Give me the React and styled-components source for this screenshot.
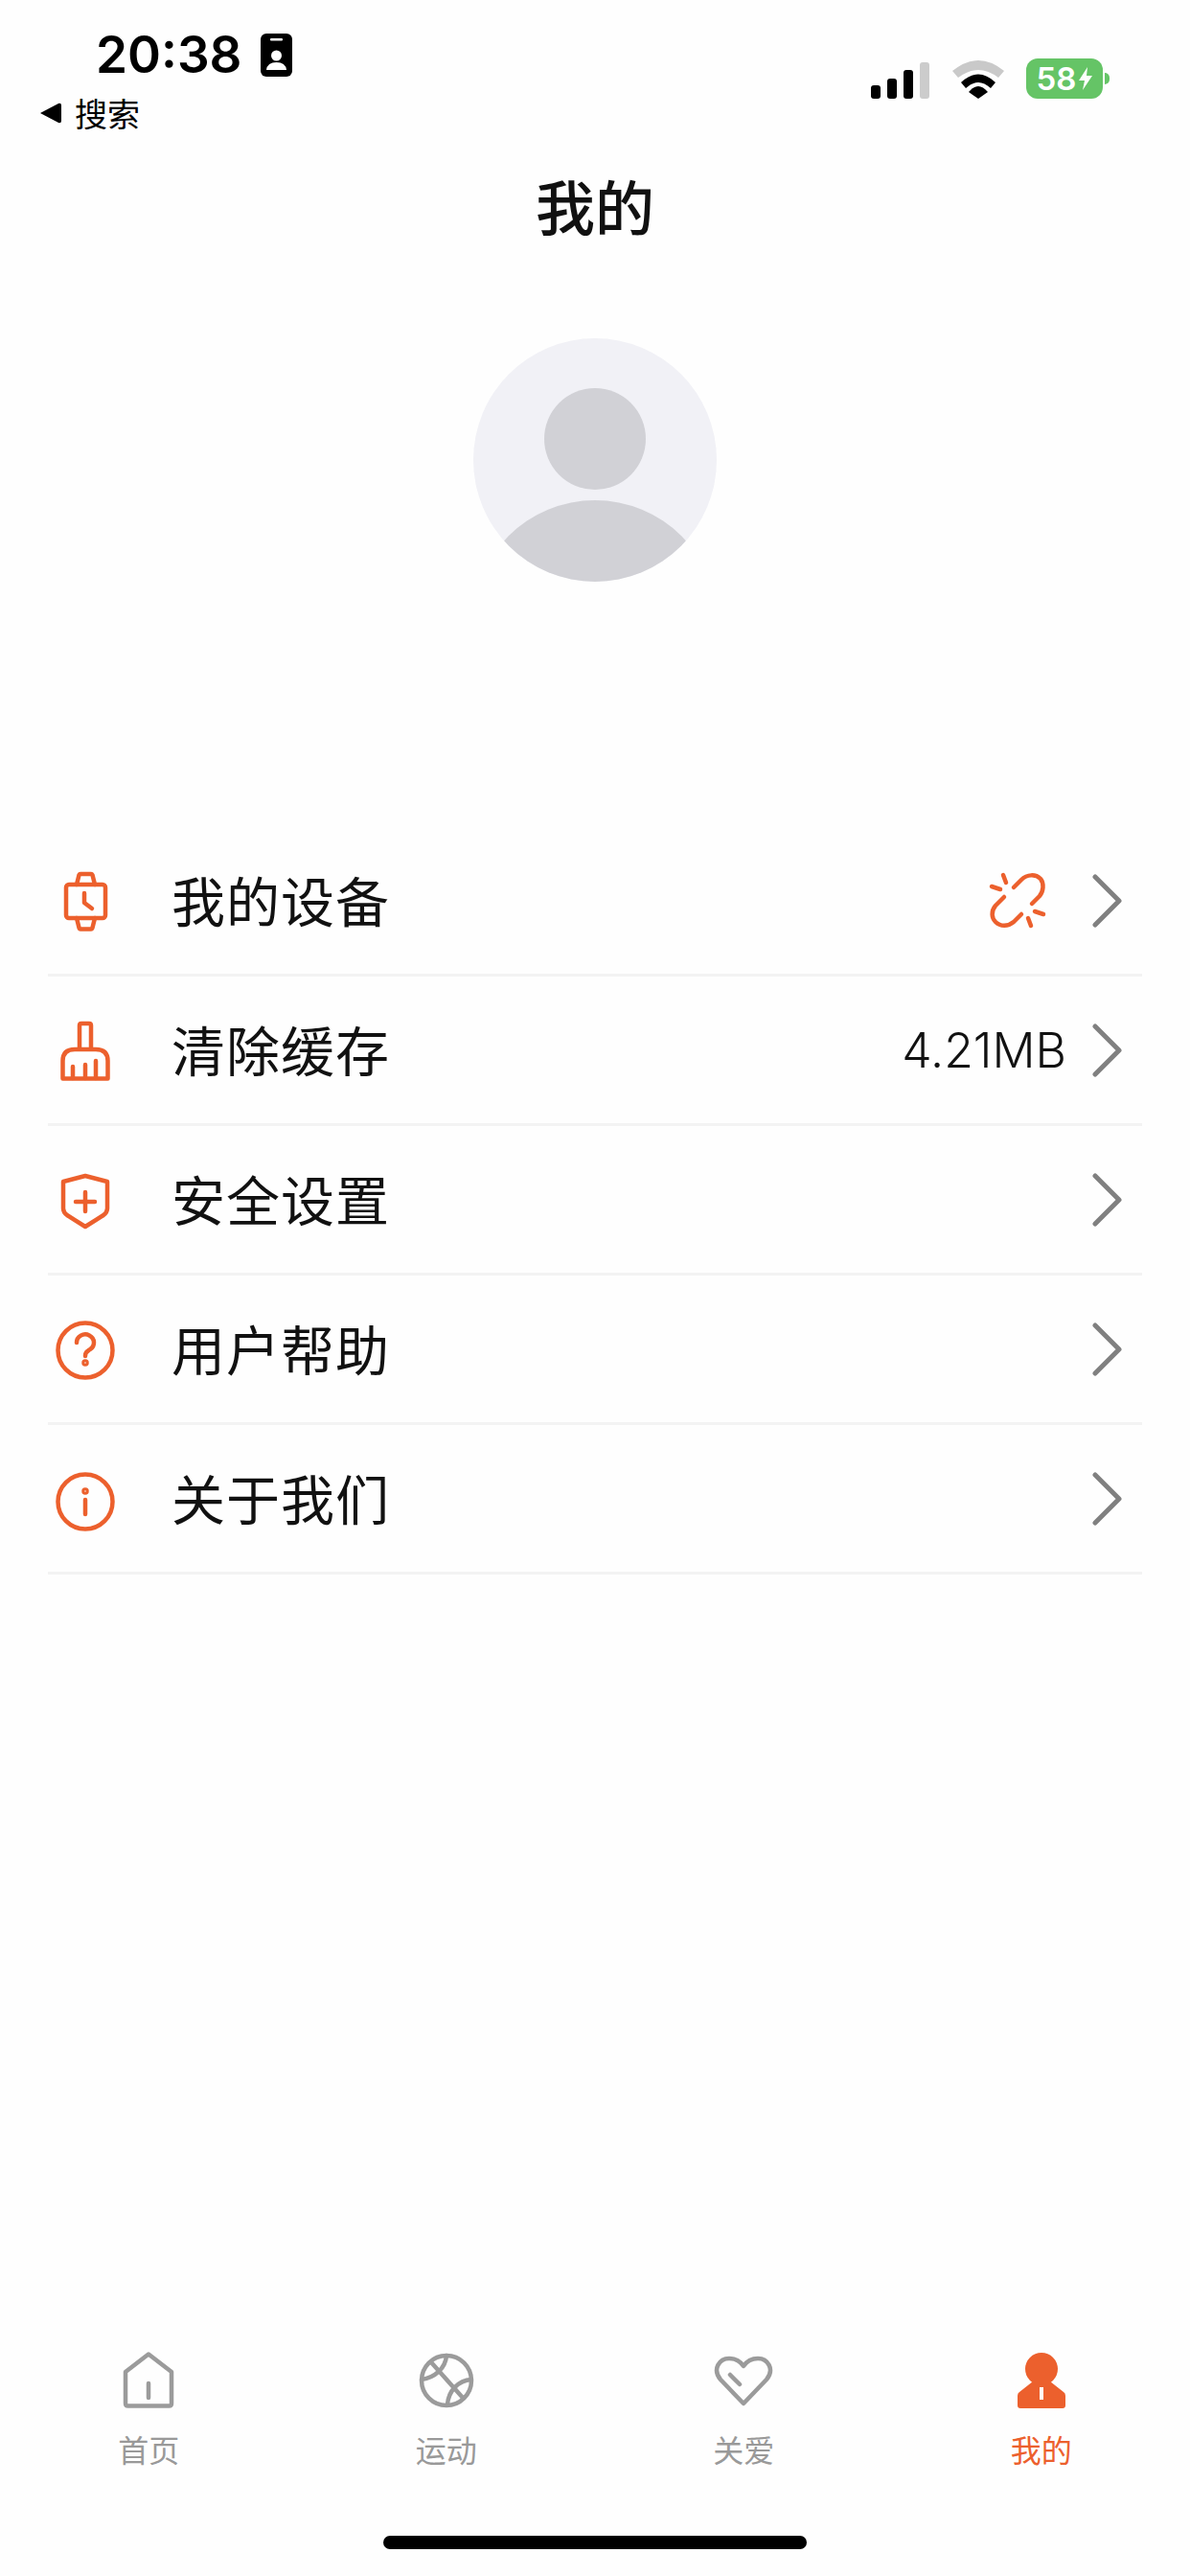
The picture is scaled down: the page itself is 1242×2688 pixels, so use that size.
import React from "react";
import styled, { createGlobalStyle } from "styled-components";

const ORANGE = "#ec602d";
const GRAY = "#9b9b9b";
const CJK = `"Noto Sans CJK SC", "Liberation Sans", sans-serif`;

const GlobalStyle = createGlobalStyle`
  html, body {
    margin: 0;
    padding: 0;
    background: #fefefe;
  }
`;

// 메뉴 아이콘
const WatchIcon = () => (
  <MenuSvg viewBox="0 0 72 72">
    <rect x="16" y="19" width="41" height="35" rx="3" />
    <path d="M27 19 L29.5 9 Q30 8 31 8 H42 Q43 8 43.5 9 L46 19" />
    <path d="M27 54 L29.5 64 Q30 65.500 31 65.500 H42 Q43 65.500 43.500 64 L46 54" />
    <path d="M35 28 V38 L43 44" />
  </MenuSvg>
);

const BroomIcon = () => (
  <MenuSvg viewBox="0 0 72 72">
    <path d="M30 34 V10 Q30 8 32 8 H40 Q42 8 42 10 V34" />
    <path d="M12.500 65.500 V47 Q12.500 35 25 35 H47 Q59.500 35 59.500 47 V65.500 Z" />
    <path d="M23 65 V53 M36 65 V51 M47 65 V47" />
  </MenuSvg>
);

const ShieldIcon = () => (
  <MenuSvg viewBox="0 0 72 72">
    <path d="M36 11 L59 17 V45 Q59 49 55 52 L36 64 L17 52 Q13 49 13 45 V17 Z" />
    <path d="M26 38 H46 M36 28 V48" />
  </MenuSvg>
);

const HelpIcon = () => (
  <MenuSvg viewBox="0 0 72 72">
    <circle cx="36" cy="37" r="28.500" />
    <path d="M27 29 a9 8.500 0 1 1 14 7 c-3 2 -5 3 -5 7" />
    <circle cx="36" cy="50" r="1.500" />
  </MenuSvg>
);

const InfoIcon = () => (
  <MenuSvg viewBox="0 0 72 72">
    <circle cx="36" cy="39" r="28.500" />
    <circle cx="36" cy="28" r="1.500" />
    <path d="M36 37 V52" />
  </MenuSvg>
);

const BrokenLink = () => (
  <LinkSvg viewBox="0 0 60 60">
    <path d="M26 16 L34 8 C40 2 49 2 54 7 C58 12 57 20 53 25 L45 33" />
    <path d="M16 26 L7 35 C2 41 3 48 7 52 C12 57 20 57 26 52 L34 44" />
    <path d="M15 3 L18 11 M3 15 L12 18 M48 41 L57 44 M41 48 L44 56" />
  </LinkSvg>
);

const Chevron = () => (
  <ChevronSvg viewBox="0 0 32 56">
    <path d="M3 3 L28 28 L3 53" />
  </ChevronSvg>
);

// 탭 아이콘
const HomeIcon = () => (
  <TabSvg viewBox="0 0 72 64" $color={GRAY}>
    <path d="M36 4.500 L60 23 V56 Q60 58.500 57.500 58.500 H14.500 Q12 58.500 12 56 V23 Z" />
    <path d="M36 35 V50" />
  </TabSvg>
);

const BallIcon = () => (
  <TabSvg viewBox="0 0 72 64" $color={GRAY}>
    <circle cx="36" cy="32" r="26" />
    <path d="M20 13 L53 50" />
    <path d="M36 6 C35 19 24 29 10 31" />
    <path d="M62 31 C48 32 38 43 37 57" />
  </TabSvg>
);

const HeartIcon = () => (
  <TabSvg viewBox="0 0 72 64" $color={GRAY}>
    <path d="M36 56 L12 31 C3 20 11 9 21 9 C27 9 32 11 36 17 C40 11 45 9 51 9 C61 9 69 20 60 31 Z" />
    <path d="M22 26 L32 36" />
  </TabSvg>
);

const PersonIcon = () => (
  <TabSvg viewBox="0 0 72 64" $color={ORANGE} $filled>
    <circle cx="36" cy="20" r="17" />
    <path d="M11 48 Q11 45 13 44 L27 33 H45 L59 44 Q61 45 61 48 V58 Q61 61 58 61 H14 Q11 61 11 58 Z" />
    <rect x="34" y="39" width="4" height="13" fill="#fefefe" stroke="none" />
  </TabSvg>
);

const Avatar = () => (
  <AvatarSvg viewBox="0 0 254 254">
    <defs>
      <clipPath id="avatarClip">
        <circle cx="127" cy="127" r="127" />
      </clipPath>
    </defs>
    <circle cx="127" cy="127" r="127" fill="#f1f1f6" />
    <circle cx="127" cy="105" r="53" fill="#d1d1d6" />
    <circle cx="127" cy="297" r="128" fill="#d1d1d6" clipPath="url(#avatarClip)" />
  </AvatarSvg>
);

const signal = [
  { height: 14 },
  { height: 21 },
  { height: 30 },
  { height: 38, off: true },
];

const App = () => {
  const menus = [
    { title: "我的设备", icon: <WatchIcon />, extra: <BrokenLink /> },
    { title: "清除缓存", icon: <BroomIcon />, extra: <Value>4.21MB</Value> },
    { title: "安全设置", icon: <ShieldIcon /> },
    { title: "用户帮助", icon: <HelpIcon /> },
    { title: "关于我们", icon: <InfoIcon /> },
  ];

  const tabs = [
    { title: "首页", icon: <HomeIcon /> },
    { title: "运动", icon: <BallIcon /> },
    { title: "关爱", icon: <HeartIcon /> },
    { title: "我的", icon: <PersonIcon />, active: true },
  ];

  return (
    <>
      <GlobalStyle />
      <StPage>
        <StStatusBar>
          <StStatusLeft>
            <StTimeRow>
              <StTime>20:38</StTime>
              <svg width="33" height="45" viewBox="0 0 33 45">
                <rect width="33" height="45" rx="6" fill="#000" />
                <rect x="10" y="5" width="13" height="2.500" rx="1" fill="#fff" />
                <circle cx="16.500" cy="23" r="5.500" fill="#fff" />
                <path d="M6 38 Q7 30 16.500 30 Q26 30 27 38 Z" fill="#fff" />
              </svg>
            </StTimeRow>
            <StBackRow>
              <svg width="23" height="22" viewBox="0 0 23 22">
                <path d="M1 11 L20 1 Q23 0 23 3 V19 Q23 22 20 21 Z" fill="#000" />
              </svg>
              <StBackText>搜索</StBackText>
            </StBackRow>
          </StStatusLeft>
          <StStatusRight>
            <StSignal>
              {signal.map((bar, i) => (
                <StBar key={i} $height={bar.height} $off={bar.off} />
              ))}
            </StSignal>
            <svg width="54" height="40" viewBox="0 0 54 40">
              <path d="M0 11 Q27 -11 54 11 L48 18 Q27 2 6 18 Z" fill="#c9c9c9" />
              <path d="M9 23 Q27 6 45 23 L40 29 Q27 17 14 29 Z" fill="#000" />
              <path d="M17 33 Q27 21 37 33 L27 40 Z" fill="#000" />
            </svg>
            <StBattery>
              58
              <svg width="14" height="24" viewBox="0 0 14 24">
                <path d="M9 0 L0 14 H6 L4 24 L14 9 H8 Z" fill="#fff" />
              </svg>
            </StBattery>
          </StStatusRight>
        </StStatusBar>

        <StTitle>我的</StTitle>
        <StAvatarWrap>
          <Avatar />
        </StAvatarWrap>

        <StMenuList>
          {menus.map((menu) => (
            <StMenuRow key={menu.title}>
              <StIconBox>{menu.icon}</StIconBox>
              <StMenuTitle>{menu.title}</StMenuTitle>
              {menu.extra}
              <Chevron />
            </StMenuRow>
          ))}
        </StMenuList>

        <StTabBar>
          {tabs.map((tab) => (
            <StTab key={tab.title} $active={tab.active}>
              {tab.icon}
              {tab.title}
            </StTab>
          ))}
        </StTabBar>
        <StHomeBar />
      </StPage>
    </>
  );
};

export default App;

const StPage = styled.div`
  width: 1242px;
  height: 2688px;
  display: flex;
  flex-direction: column;
  background: #fefefe;
  overflow: hidden;
  font-family: ${CJK};
`;

const StStatusBar = styled.div`
  height: 174px;
  box-sizing: border-box;
  padding: 30px 84px 0 41px;
  display: flex;
  justify-content: space-between;
  align-items: flex-start;
`;

const StStatusLeft = styled.div`
  display: flex;
  flex-direction: column;
  gap: 14px;
`;

const StTimeRow = styled.div`
  display: flex;
  align-items: center;
  gap: 19px;
  margin-left: 59px;
  height: 54px;
`;

const StTime = styled.span`
  font-family: Inter, "Liberation Sans", sans-serif;
  font-size: 53px;
  line-height: 54px;
  font-weight: 600;
  color: #000;
`;

const StBackRow = styled.div`
  display: flex;
  align-items: center;
  gap: 14px;
  height: 40px;
`;

const StBackText = styled.span`
  font-size: 34px;
  line-height: 40px;
  color: #000;
`;

const StStatusRight = styled.div`
  display: flex;
  align-items: flex-end;
  gap: 0;
  margin-top: 31px;
  margin-right: 7px;

  & > svg {
    margin: 0 23px 0 24px;
  }
`;

const StSignal = styled.div`
  display: flex;
  align-items: flex-end;
  gap: 7px;
  height: 39px;
`;

const StBar = styled.div`
  width: 10px;
  height: ${(props) => props.$height}px;
  border-radius: 3px;
  background: ${(props) => (props.$off ? "#cccccc" : "#000")};
`;

const StBattery = styled.div`
  position: relative;
  width: 80px;
  height: 42px;
  border-radius: 12px;
  background: #65c466;
  color: #fff;
  font-family: Inter, "Liberation Sans", sans-serif;
  font-size: 33px;
  font-weight: 600;
  line-height: 42px;
  display: flex;
  align-items: center;
  justify-content: center;
  gap: 3px;

  &::after {
    content: "";
    position: absolute;
    right: -7px;
    top: 15px;
    width: 5px;
    height: 12px;
    border-radius: 0 6px 6px 0;
    background: #65c466;
  }
`;

const StTitle = styled.div`
  height: 80px;
  line-height: 80px;
  text-align: center;
  font-size: 62px;
  font-weight: 500;
  color: #111;
`;

const StAvatarWrap = styled.div`
  display: flex;
  justify-content: center;
  margin-top: 99px;
`;

const AvatarSvg = styled.svg`
  width: 254px;
  height: 254px;
  display: block;
`;

const StMenuList = styled.div`
  margin: 256px 50px 0;
  display: flex;
  flex-direction: column;
`;

const StMenuRow = styled.div`
  height: 156px;
  box-sizing: border-box;
  display: flex;
  align-items: center;
  padding: 0 20px 0 3px;
  border-bottom: 3px solid #f3f3f3;
`;

const StIconBox = styled.div`
  width: 72px;
  height: 72px;
  margin-right: 54px;
`;

const MenuSvg = styled.svg`
  width: 72px;
  height: 72px;
  display: block;
  fill: none;
  stroke: ${ORANGE};
  stroke-width: 4.5;
  stroke-linecap: round;
  stroke-linejoin: round;
`;

const StMenuTitle = styled.div`
  flex: 1;
  font-size: 56px;
  line-height: 80px;
  letter-spacing: 1px;
  margin-top: -3px;
  color: #111;
`;

const Value = styled.span`
  font-family: Inter, "Liberation Sans", Arial, sans-serif;
  font-size: 50px;
  font-weight: 300;
  line-height: 60px;
  color: #111;
  margin-right: 27px;
`;

const LinkSvg = styled.svg`
  width: 60px;
  height: 60px;
  margin-right: 48px;
  fill: none;
  stroke: ${ORANGE};
  stroke-width: 4.5;
  stroke-linecap: round;
  stroke-linejoin: round;
`;

const ChevronSvg = styled.svg`
  width: 32px;
  height: 56px;
  fill: none;
  stroke: #808080;
  stroke-width: 5;
  stroke-linecap: round;
  stroke-linejoin: round;
`;

const StTabBar = styled.div`
  margin-top: auto;
  display: grid;
  grid-template-columns: repeat(4, 1fr);
`;

const StTab = styled.div`
  display: flex;
  flex-direction: column;
  align-items: center;
  gap: 17px;
  font-size: 32px;
  line-height: 44px;
  color: ${(props) => (props.$active ? ORANGE : "#999999")};
`;

const TabSvg = styled.svg`
  width: 72px;
  height: 64px;
  display: block;
  fill: ${(props) => (props.$filled ? props.$color : "none")};
  stroke: ${(props) => (props.$filled ? "none" : props.$color)};
  stroke-width: 4.5;
  stroke-linecap: round;
  stroke-linejoin: round;
`;

const StHomeBar = styled.div`
  width: 442px;
  height: 14px;
  border-radius: 7px;
  background: #000;
  align-self: center;
  margin: 69px 0 28px;
`;
